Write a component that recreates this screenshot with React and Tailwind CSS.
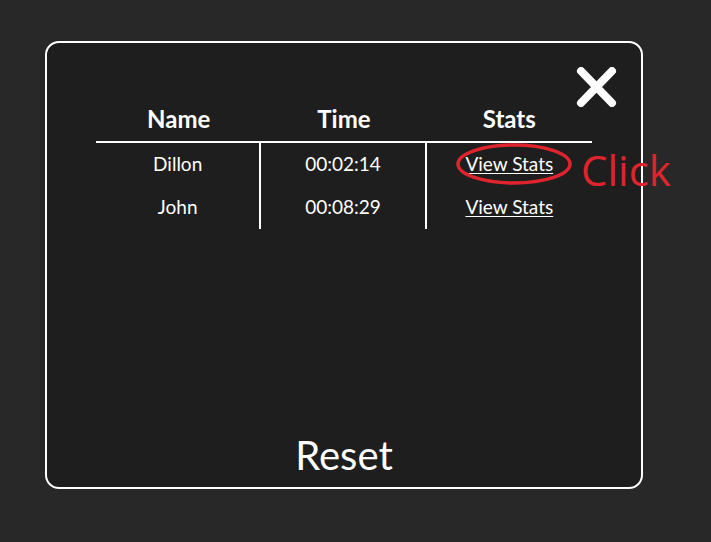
import React from "react";

const rows = [
  { name: "Dillon", time: "00:02:14", highlight: true },
  { name: "John", time: "00:08:29" },
];

function CloseIcon() {
  return (
    <svg width="41" height="40" viewBox="0 0 41 40">
      <path
        d="M5 4 L36 36 M36 4 L5 36"
        stroke="#ffffff"
        strokeWidth="8"
        strokeLinecap="round"
        fill="none"
      />
    </svg>
  );
}

export default function App() {
  return (
    <div
      className="min-h-[542px] w-full bg-[#282828] pl-[45px] pt-[41px]"
      style={{ fontFamily: "Lato, 'Open Sans', sans-serif" }}
    >
      <div className="relative flex h-[448px] w-[598px] flex-col items-center rounded-[14px] border-2 border-white bg-[#1e1e1e] text-white">
        {/* close button */}
        <button className="absolute right-[24px] top-[24px]">
          <CloseIcon />
        </button>

        {/* table */}
        <div className="mt-[54px] w-[496px]">
          <div className="grid h-[46px] grid-cols-3 items-center border-b-2 border-white text-[24px] font-bold">
            <div className="text-center">Name</div>
            <div className="text-center">Time</div>
            <div className="text-center">Stats</div>
          </div>
          {rows.map((row) => (
            <div key={row.name} className="grid h-[43px] grid-cols-3 text-[19px]">
              <div className="flex items-center justify-center border-r-2 border-white">
                {row.name}
              </div>
              <div className="flex items-center justify-center border-r-2 border-white">
                {row.time}
              </div>
              <div className="relative flex items-center justify-center">
                <a className="cursor-pointer underline underline-offset-2">View Stats</a>
                {row.highlight && (
                  <svg
                    className="absolute left-[28px] top-[-1px]"
                    width="118"
                    height="44"
                    viewBox="0 0 118 44"
                  >
                    <ellipse
                      cx="59"
                      cy="22"
                      rx="56"
                      ry="19"
                      stroke="#e0242e"
                      strokeWidth="3.5"
                      fill="none"
                    />
                  </svg>
                )}
              </div>
            </div>
          ))}
        </div>

        {/* annotation */}
        <div
          className="absolute left-[534px] top-[106px] text-[42px] leading-none text-[#e0242e]"
          style={{ fontFamily: "'Open Sans', 'Liberation Sans', sans-serif" }}
        >
          Click
        </div>

        <button className="mt-auto pb-[8px] text-[40px] leading-[48px]">Reset</button>
      </div>
    </div>
  );
}
